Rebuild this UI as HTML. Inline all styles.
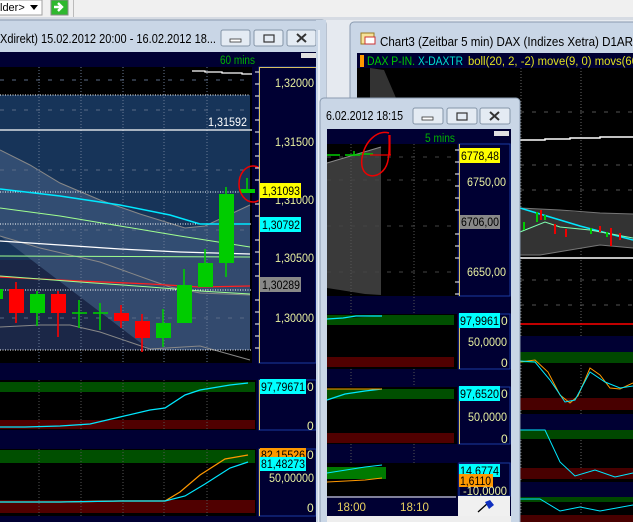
<!DOCTYPE html>
<html><head><meta charset="utf-8"><style>
html,body{margin:0;padding:0;width:633px;height:522px;overflow:hidden;background:#e6eaf0}
svg{display:block}
text{font-family:"Liberation Sans",sans-serif}
</style></head><body>
<svg width="633" height="522" viewBox="0 0 633 522" xmlns="http://www.w3.org/2000/svg">
<!-- toolbar -->
<rect x="0" y="0" width="633" height="18" fill="#f0f0f0"/>
<rect x="0" y="17" width="633" height="3" fill="#d6dbe3"/>
<rect x="-2" y="0" width="44" height="15" fill="#fff" stroke="#a0a0a0"/>
<text x="0" y="11" font-size="11" fill="#000">lder&gt;</text>
<path d="M30 5 L38 5 L34 10 Z" fill="#000"/>
<rect x="51" y="0" width="17" height="15" fill="#2fb82f" stroke="#888"/>
<path d="M54 7 H61 M58 3 L62 7 L58 11" stroke="#fff" stroke-width="2.4" fill="none"/>
<rect x="73" y="0" width="1" height="17" fill="#bbb"/>

<!-- Window 2 (Chart3) frame -->
<rect x="350" y="22" width="290" height="500" rx="4" fill="#c9d6e6" stroke="#8a9bb0"/>
<text x="380" y="46" font-size="12.5" fill="#000" textLength="253" lengthAdjust="spacingAndGlyphs">Chart3 (Zeitbar 5 min)  DAX (Indizes Xetra) D1AR</text>
<rect x="361" y="33" width="13" height="11" fill="#f5e39a" stroke="#9a7a20"/>
<rect x="365" y="37" width="10" height="7" fill="#fff" stroke="#c33"/>
<rect x="357" y="53" width="280" height="15" fill="#000033"/>
<rect x="360" y="55" width="4" height="12" fill="#ff9900"/>
<text x="367" y="65" font-size="11.5" fill="#00cc00" textLength="48" lengthAdjust="spacingAndGlyphs">DAX P-IN.</text>
<text x="418" y="65" font-size="11.5" fill="#00e0d0" textLength="45" lengthAdjust="spacingAndGlyphs">X-DAXTR</text>
<text x="468" y="65" font-size="11.5" fill="#e0e020" textLength="180" lengthAdjust="spacingAndGlyphs">boll(20, 2, -2) move(9, 0) movs(60, (</text>
<rect x="357" y="68" width="280" height="454" fill="#000"/>
<g stroke="#666" stroke-dasharray="1,2">
<line x1="521" y1="68" x2="521" y2="522"/><line x1="581" y1="68" x2="581" y2="522"/>
</g>
<g stroke="#555" stroke-dasharray="4,8">
<line x1="520" y1="112" x2="633" y2="112"/><line x1="520" y1="165" x2="633" y2="165"/><line x1="520" y1="190" x2="633" y2="190"/><line x1="520" y1="280" x2="633" y2="280"/><line x1="520" y1="305" x2="633" y2="305"/>
</g>
<path d="M520 140 H545 V139 H570 V138 H600 V137 H633" stroke="#fff" stroke-width="1.5" fill="none"/>
<path d="M520 208 L560 210 L575 212 L600 213 L633 214 L633 248 L600 245 L570 250 L540 255 L520 255 Z" fill="#333"/>
<path d="M520 208 L560 210 L600 213 L633 214 M520 255 L540 255 L570 250 L600 245 L633 248" stroke="#777" fill="none"/>
<path d="M520 208 L550 217 L580 226 L633 240" stroke="#00e8ff" stroke-width="1.5" fill="none"/>
<path d="M520 232 L545 222 L560 227 L590 230 L633 238" stroke="#80ffb0" fill="none"/>
<g stroke-width="2"><path d="M524 222 V230 M537 212 V222 M545 215 V220 M591 228 V234 M607 232 V237" stroke="#00cc00"/><path d="M541 210 V220 M555 224 V234 M566 229 V237 M600 226 V232 M611 228 V246 M620 233 V240" stroke="#e00"/></g>
<line x1="520" y1="258" x2="633" y2="258" stroke="#fff" stroke-width="1.5"/>
<line x1="520" y1="324" x2="633" y2="324" stroke="#f00" stroke-width="1.5"/>
<rect x="518" y="336" width="115" height="16" fill="#000033"/>
<rect x="518" y="352" width="115" height="11" fill="#004800"/>
<rect x="518" y="398" width="115" height="12" fill="#480000"/>
<path d="M520 362 L535 360 L548 372 L560 395 L570 403 L578 396 L590 368 L600 375 L610 388 L620 389 L633 383" stroke="#ff9900" fill="none"/>
<path d="M520 361 L535 362 L550 380 L565 402 L575 400 L590 372 L605 382 L620 388 L633 386" stroke="#00e8ff" fill="none"/>
<rect x="518" y="414" width="115" height="16" fill="#000033"/>
<rect x="518" y="430" width="115" height="9" fill="#004800"/>
<rect x="518" y="468" width="115" height="11" fill="#480000"/>
<path d="M520 430 L545 430 L560 462 L575 476 L595 470 L615 477 L633 473" stroke="#00e8ff" fill="none"/>
<rect x="518" y="482" width="115" height="15" fill="#000033"/>
<rect x="518" y="497" width="115" height="5" fill="#004800"/>
<rect x="518" y="515" width="115" height="7" fill="#480000"/>
<path d="M520 499 L540 499 L560 511 L580 507 L600 511 L633 505" stroke="#00e8ff" fill="none"/>
<path d="M370 68 L384 70 L396 98 L370 98 Z" fill="#333"/>

<!-- Window 1 frame -->
<rect x="-10" y="20" width="336" height="510" rx="4" fill="#c9d6e6" stroke="#8a9bb0"/>
<text x="0" y="43" font-size="12.5" fill="#000" textLength="216" lengthAdjust="spacingAndGlyphs">Xdirekt) 15.02.2012 20:00 - 16.02.2012 18...</text>
<g fill="#e4ebf3" stroke="#8595a8"><rect x="221" y="30" width="29" height="16" rx="2"/><rect x="254" y="30" width="29" height="16" rx="2"/><rect x="287" y="30" width="29" height="16" rx="2"/></g>
<rect x="230" y="39" width="11" height="3" fill="#fff" stroke="#333" stroke-width="0.8"/>
<rect x="264" y="35" width="10" height="7" fill="none" stroke="#333" stroke-width="1.2"/>
<path d="M297 34 L306 42 M306 34 L297 42" stroke="#333" stroke-width="2"/>
<rect x="0" y="52" width="316" height="470" fill="#000033"/>
<text x="220" y="64" font-size="11.5" fill="#00b000" textLength="35" lengthAdjust="spacingAndGlyphs">60 mins</text>
<rect x="301" y="53" width="15" height="5" fill="#e0e0e0"/>
<!-- main chart -->
<rect x="0" y="67" width="252" height="296" fill="#000"/>
<rect x="0" y="95" width="250" height="255" fill="#173459"/>
<rect x="0" y="260" width="250" height="90" fill="#1b2747"/>
<path d="M0 150 L30 165 L60 183 L100 200 L140 214 L185 228 L205 226 L250 205 L250 350 L150 350 L0 236 Z" fill="#3a5478" opacity="0.8"/>
<path d="M0 150 L30 165 L60 183 L100 200 L140 214 L185 228 L205 226 L250 205" stroke="#888" fill="none"/>
<path d="M0 236 L40 248 L100 262 L150 280 L170 287 L200 293 L250 295" stroke="#888" fill="none"/>
<path d="M0 327 L40 325 L70 325 L100 332 L150 349 L200 346 L250 360" stroke="#888" fill="none"/>
<g stroke="#6a7a95" stroke-dasharray="1,2">
<line x1="39" y1="67" x2="39" y2="363"/><line x1="81" y1="67" x2="81" y2="363"/><line x1="123" y1="67" x2="123" y2="363"/><line x1="164" y1="67" x2="164" y2="363"/><line x1="207" y1="67" x2="207" y2="363"/>
</g>
<g stroke="#5a6a85" stroke-dasharray="4,8">
<line x1="0" y1="80" x2="250" y2="80"/><line x1="0" y1="110" x2="250" y2="110"/><line x1="0" y1="170" x2="250" y2="170"/><line x1="0" y1="230" x2="250" y2="230"/><line x1="0" y1="318" x2="250" y2="318"/>
</g>
<path d="M192 71 H205 V72 H222 V73 H242 V74 H252" stroke="#fff" fill="none" stroke-width="1.3"/>
<line x1="0" y1="95" x2="250" y2="95" stroke="#fff" stroke-dasharray="1,1.5"/>
<line x1="0" y1="130" x2="252" y2="130" stroke="#fff" stroke-width="1.3"/>
<text x="208" y="126" font-size="12" fill="#fff" textLength="39" lengthAdjust="spacingAndGlyphs">1,31592</text>
<line x1="0" y1="192" x2="252" y2="192" stroke="#fff" stroke-dasharray="1,1.5"/>
<line x1="0" y1="224" x2="252" y2="224" stroke="#fff" stroke-dasharray="1,1.5"/>
<line x1="0" y1="290" x2="252" y2="290" stroke="#fff" stroke-dasharray="1,1.5"/>
<line x1="0" y1="350" x2="252" y2="350" stroke="#fff" stroke-dasharray="1,1.5"/>
<path d="M0 189 L60 196 L120 205 L170 215 L200 224 L250 224" stroke="#00e8ff" stroke-width="1.5" fill="none"/>
<path d="M0 208 L60 216 L120 226 L180 236 L250 247" stroke="#a0ff90" fill="none"/>
<path d="M0 241 L60 245 L120 249 L180 252 L250 254" stroke="#fff" stroke-width="1.3" fill="none"/>
<path d="M0 256 L250 257" stroke="#a0ff90" fill="none"/>
<path d="M0 277 L80 281 L150 284 L200 287 L250 286" stroke="#ff2020" stroke-width="1.3" fill="none"/>
<path d="M0 276 L80 282 L150 287 L200 291 L250 294" stroke="#a0ff90" fill="none"/>
<g stroke-width="1.6">
<rect x="0" y="289" width="3" height="10" fill="#00cc00"/>
<line x1="16" y1="282" x2="16" y2="323" stroke="#f00"/><rect x="9" y="289" width="15" height="24" fill="#f00"/>
<line x1="37" y1="291" x2="37" y2="326" stroke="#00cc00"/><rect x="30" y="294" width="15" height="19" fill="#00cc00"/>
<line x1="58" y1="291" x2="58" y2="337" stroke="#f00"/><rect x="51" y="294" width="15" height="19" fill="#f00"/>
<line x1="79" y1="300" x2="79" y2="328" stroke="#00cc00"/><line x1="72" y1="313" x2="87" y2="313" stroke="#00cc00"/>
<line x1="100" y1="303" x2="100" y2="330" stroke="#00cc00"/><line x1="93" y1="313" x2="108" y2="313" stroke="#00cc00"/>
<line x1="121" y1="305" x2="121" y2="328" stroke="#f00"/><rect x="114" y="313" width="15" height="8" fill="#f00"/>
<line x1="142" y1="314" x2="142" y2="352" stroke="#f00"/><rect x="135" y="321" width="15" height="17" fill="#f00"/>
<line x1="163" y1="309" x2="163" y2="347" stroke="#00cc00"/><rect x="156" y="323" width="15" height="15" fill="#00cc00"/>
<line x1="184" y1="269" x2="184" y2="290" stroke="#00cc00"/><rect x="177" y="285" width="15" height="38" fill="#00cc00"/>
<line x1="205" y1="249" x2="205" y2="265" stroke="#00cc00"/><rect x="198" y="263" width="15" height="24" fill="#00cc00"/>
<line x1="226" y1="187" x2="226" y2="277" stroke="#00cc00"/><rect x="219" y="194" width="15" height="69" fill="#00cc00"/>
<line x1="247" y1="178" x2="247" y2="190" stroke="#00cc00"/><rect x="240" y="189" width="15" height="4" fill="#00cc00"/>
</g>
<ellipse cx="253" cy="184" rx="14" ry="18" fill="none" stroke="#e00" stroke-width="1.5"/>
<!-- axis 1 -->
<rect x="259" y="67" width="57" height="296" fill="#000033" stroke="#1a3aa0"/>
<line x1="259.5" y1="67" x2="259.5" y2="363" stroke="#d8c060"/>
<line x1="259" y1="67.5" x2="316" y2="67.5" stroke="#d8c060"/>
<g stroke="#fff"><path d="M255 72H259M255 84H259M255 96H259M255 108H259M255 120H259M255 132H259M255 144H259M255 156H259M255 168H259M255 180H259M255 204H259M255 216H259M255 240H259M255 252H259M255 264H259M255 276H259M255 300H259M255 312H259M255 324H259M255 336H259M255 348H259"/></g>
<g font-size="12" fill="#e8f0a0" lengthAdjust="spacingAndGlyphs">
<text x="275" y="87" textLength="39" lengthAdjust="spacingAndGlyphs">1,32000</text><text x="275" y="146" textLength="39" lengthAdjust="spacingAndGlyphs">1,31500</text><text x="275" y="204" textLength="39" lengthAdjust="spacingAndGlyphs">1,31000</text><text x="275" y="262" textLength="39" lengthAdjust="spacingAndGlyphs">1,30500</text><text x="275" y="322" textLength="39" lengthAdjust="spacingAndGlyphs">1,30000</text></g>
<rect x="260" y="183" width="41" height="15" fill="#ffff00"/><text x="262" y="195" font-size="12" fill="#000" textLength="38" lengthAdjust="spacingAndGlyphs">1,31093</text>
<rect x="260" y="217" width="41" height="15" fill="#00ffff"/><text x="262" y="229" font-size="12" fill="#000" textLength="38" lengthAdjust="spacingAndGlyphs">1,30792</text>
<rect x="260" y="277" width="41" height="15" fill="#888"/><text x="262" y="289" font-size="12" fill="#000" textLength="38" lengthAdjust="spacingAndGlyphs">1,30289</text>
<!-- panel 2 -->
<rect x="0" y="380" width="256" height="50" fill="#000"/>
<rect x="0" y="382" width="255" height="10" fill="#004f00"/>
<rect x="0" y="420" width="255" height="9" fill="#500000"/>
<g stroke="#555" stroke-dasharray="1,2"><line x1="39" y1="380" x2="39" y2="430"/><line x1="81" y1="380" x2="81" y2="430"/><line x1="123" y1="380" x2="123" y2="430"/><line x1="164" y1="380" x2="164" y2="430"/><line x1="207" y1="380" x2="207" y2="430"/></g>
<path d="M0 427 L25 427 L60 426 L90 424 L120 417 L150 410 L165 408 L185 395 L200 390 L230 385 L248 383" stroke="#00e8ff" stroke-width="1.3" fill="none"/>
<rect x="259" y="380" width="57" height="50" fill="#000033" stroke="#1a3aa0"/>
<line x1="259.5" y1="380" x2="259.5" y2="430" stroke="#d8c060"/>
<rect x="260" y="379" width="46" height="15" fill="#00ffff"/><text x="261" y="391" font-size="12" fill="#000" textLength="44" lengthAdjust="spacingAndGlyphs">97,79671</text>
<text x="307" y="391" font-size="12" fill="#e8f0a0">0</text><text x="307" y="430" font-size="12" fill="#e8f0a0">0</text>
<!-- panel 3 -->
<rect x="0" y="449" width="256" height="67" fill="#000"/>
<rect x="0" y="450" width="255" height="13" fill="#004f00"/>
<rect x="0" y="500" width="255" height="13" fill="#500000"/>
<g stroke="#555" stroke-dasharray="1,2"><line x1="39" y1="449" x2="39" y2="516"/><line x1="81" y1="449" x2="81" y2="516"/><line x1="123" y1="449" x2="123" y2="516"/><line x1="164" y1="449" x2="164" y2="516"/><line x1="207" y1="449" x2="207" y2="516"/></g>
<path d="M0 502 L60 502 L120 501 L165 501 L180 492 L200 475 L225 459 L248 455" stroke="#ff9900" stroke-width="1.2" fill="none"/>
<path d="M0 502 L60 502 L120 501 L165 501 L185 496 L205 484 L230 468 L248 462" stroke="#00e8ff" stroke-width="1.2" fill="none"/>
<rect x="259" y="449" width="57" height="67" fill="#000033" stroke="#1a3aa0"/>
<line x1="259.5" y1="449" x2="259.5" y2="516" stroke="#d8c060"/>
<rect x="260" y="448" width="46" height="12" fill="#ff9900"/><text x="261" y="459" font-size="12" fill="#000" textLength="44" lengthAdjust="spacingAndGlyphs">82,15526</text>
<rect x="260" y="457" width="46" height="14" fill="#00ffff"/><text x="261" y="468" font-size="12" fill="#000" textLength="44" lengthAdjust="spacingAndGlyphs">81,48273</text>
<text x="307" y="459" font-size="12" fill="#e8f0a0">0</text>
<text x="269" y="482" font-size="12" fill="#e8f0a0" textLength="45" lengthAdjust="spacingAndGlyphs">50,00000</text>
<text x="307" y="512" font-size="12" fill="#e8f0a0">0</text>
<rect x="316" y="20" width="10" height="502" fill="#c9d6e6"/>
<rect x="318" y="30" width="2" height="492" fill="#e8eef6"/>

<!-- Window 3 -->
<rect x="320" y="98" width="200" height="430" rx="4" fill="#c9d6e6" stroke="#8a9bb0"/>
<text x="326" y="120" font-size="12.5" fill="#000" textLength="77" lengthAdjust="spacingAndGlyphs">6.02.2012 18:15</text>
<g fill="#e4ebf3" stroke="#8595a8"><rect x="413" y="108" width="30" height="16" rx="2"/><rect x="447" y="108" width="30" height="16" rx="2"/><rect x="480" y="108" width="30" height="16" rx="2"/></g>
<rect x="422" y="117" width="11" height="3" fill="#fff" stroke="#333" stroke-width="0.8"/>
<rect x="457" y="113" width="10" height="7" fill="none" stroke="#333" stroke-width="1.2"/>
<path d="M490 112 L499 120 M499 112 L490 120" stroke="#333" stroke-width="2"/>
<rect x="327" y="129" width="184" height="388" fill="#000033"/>
<text x="425" y="142" font-size="11.5" fill="#00b000" textLength="30" lengthAdjust="spacingAndGlyphs">5 mins</text>
<rect x="494" y="131" width="15" height="5" fill="#e0e0e0"/>
<rect x="327" y="144" width="130" height="152" fill="#000"/>
<path d="M327 163 L381 147 L381 295 L365 294 L340 290 L327 288 Z" fill="#3a3a3a"/>
<path d="M327 163 L381 147" stroke="#888" fill="none"/>
<g stroke="#555" stroke-dasharray="1,2"><line x1="351" y1="144" x2="351" y2="516"/><line x1="414" y1="144" x2="414" y2="516"/></g>
<g stroke="#444" stroke-dasharray="4,8"><line x1="327" y1="157" x2="457" y2="157"/><line x1="327" y1="180" x2="457" y2="180"/><line x1="327" y1="226" x2="457" y2="226"/><line x1="327" y1="272" x2="457" y2="272"/></g>
<path d="M327 155 H340 M345 155 H360 M354 151 V156 M360 154 H373" stroke="#00cc00" stroke-width="1.5"/>
<path d="M370 155 H391 M390 135 V155" stroke="#e00" stroke-width="1.2"/>
<path d="M389 133 C378 130 365 140 362 158 C360 172 368 178 377 175 C388 170 390 160 389 135" fill="none" stroke="#e00" stroke-width="1.5"/>
<rect x="459" y="144" width="51" height="152" fill="#000033" stroke="#1a3aa0"/>
<line x1="459.5" y1="144" x2="459.5" y2="296" stroke="#d8c060"/>
<g stroke="#fff"><path d="M455 150H459M455 162H459M455 174H459M455 186H459M455 198H459M455 210H459M455 234H459M455 246H459M455 258H459M455 282H459M455 294H459"/></g>
<rect x="460" y="148" width="40" height="15" fill="#ffff00"/><text x="461" y="160" font-size="12" fill="#000" textLength="38" lengthAdjust="spacingAndGlyphs">6778,48</text>
<text x="467" y="186" font-size="12" fill="#e8f0a0" textLength="39" lengthAdjust="spacingAndGlyphs">6750,00</text>
<rect x="460" y="215" width="40" height="14" fill="#888"/><text x="461" y="226" font-size="12" fill="#000" textLength="38" lengthAdjust="spacingAndGlyphs">6706,00</text>
<text x="467" y="276" font-size="12" fill="#e8f0a0" textLength="39" lengthAdjust="spacingAndGlyphs">6650,00</text>
<!-- w3 panel 2 -->
<rect x="327" y="314" width="130" height="55" fill="#000"/>
<rect x="327" y="315" width="127" height="10" fill="#004f00"/>
<rect x="327" y="357" width="127" height="10" fill="#500000"/>
<path d="M327 319 L343 318 L356 316 L382 316" stroke="#00e8ff" stroke-width="1.2"/>
<rect x="459" y="314" width="51" height="55" fill="#000033" stroke="#1a3aa0"/>
<line x1="459.5" y1="314" x2="459.5" y2="369" stroke="#d8c060"/>
<rect x="459" y="313" width="41" height="15" fill="#00ffff"/><text x="460" y="325" font-size="12" fill="#000" textLength="39" lengthAdjust="spacingAndGlyphs">97,9961</text>
<text x="501" y="325" font-size="12" fill="#e8f0a0">0</text>
<text x="468" y="346" font-size="12" fill="#e8f0a0" textLength="39" lengthAdjust="spacingAndGlyphs">50,0000</text>
<text x="501" y="367" font-size="12" fill="#e8f0a0">0</text>
<!-- w3 panel 3 -->
<rect x="327" y="387" width="130" height="57" fill="#000"/>
<rect x="327" y="389" width="127" height="10" fill="#004f00"/>
<rect x="327" y="433" width="127" height="10" fill="#500000"/>
<path d="M327 400 L345 394 L365 391 L382 389" stroke="#00e8ff" stroke-width="1.2" fill="none"/>
<path d="M327 389 L382 389" stroke="#ff9900" stroke-width="1"/>
<rect x="459" y="387" width="51" height="57" fill="#000033" stroke="#1a3aa0"/>
<line x1="459.5" y1="387" x2="459.5" y2="444" stroke="#d8c060"/>
<rect x="459" y="386" width="41" height="15" fill="#00ffff"/><text x="460" y="398" font-size="12" fill="#000" textLength="39" lengthAdjust="spacingAndGlyphs">97,6520</text>
<text x="501" y="398" font-size="12" fill="#e8f0a0">0</text>
<text x="468" y="421" font-size="12" fill="#e8f0a0" textLength="39" lengthAdjust="spacingAndGlyphs">50,0000</text>
<text x="501" y="443" font-size="12" fill="#e8f0a0">0</text>
<!-- w3 panel 4 -->
<rect x="327" y="463" width="130" height="33" fill="#000"/>
<rect x="327" y="467" width="59" height="12" fill="#007a00"/>
<path d="M327 473 L365 467 L382 465" stroke="#00e8ff" stroke-width="1" fill="none"/>
<path d="M327 482 L365 480 L382 478" stroke="#ff9900" stroke-width="1" fill="none"/>
<rect x="459" y="463" width="51" height="33" fill="#000033" stroke="#1a3aa0"/>
<rect x="459" y="464" width="41" height="13" fill="#00ffff"/><text x="460" y="475" font-size="12" fill="#000" textLength="39" lengthAdjust="spacingAndGlyphs">14,6774</text>
<rect x="459" y="474" width="34" height="13" fill="#ff9900"/><text x="460" y="485" font-size="12" fill="#000" textLength="31" lengthAdjust="spacingAndGlyphs">1,6110</text>
<text x="463" y="495" font-size="12" fill="#e8f0a0" textLength="44" lengthAdjust="spacingAndGlyphs">-10,0000</text>
<!-- time axis -->
<rect x="327" y="497" width="130" height="19" fill="#000033"/>
<line x1="327" y1="497" x2="456" y2="497" stroke="#fff"/>
<text x="337" y="511" font-size="12" fill="#e8d060" textLength="29" lengthAdjust="spacingAndGlyphs">18:00</text>
<text x="400" y="511" font-size="12" fill="#e8d060" textLength="29" lengthAdjust="spacingAndGlyphs">18:10</text>
<rect x="458" y="496" width="52" height="20" fill="#f0f0f0"/>
<path d="M478 512 L488 503" stroke="#000" stroke-width="1.3"/>
<path d="M485 502 L490 500 L494 505 L489 509 Z" fill="#1030c0"/>
<rect x="327" y="516" width="184" height="6" fill="#eee"/>
</svg>
</body></html>
